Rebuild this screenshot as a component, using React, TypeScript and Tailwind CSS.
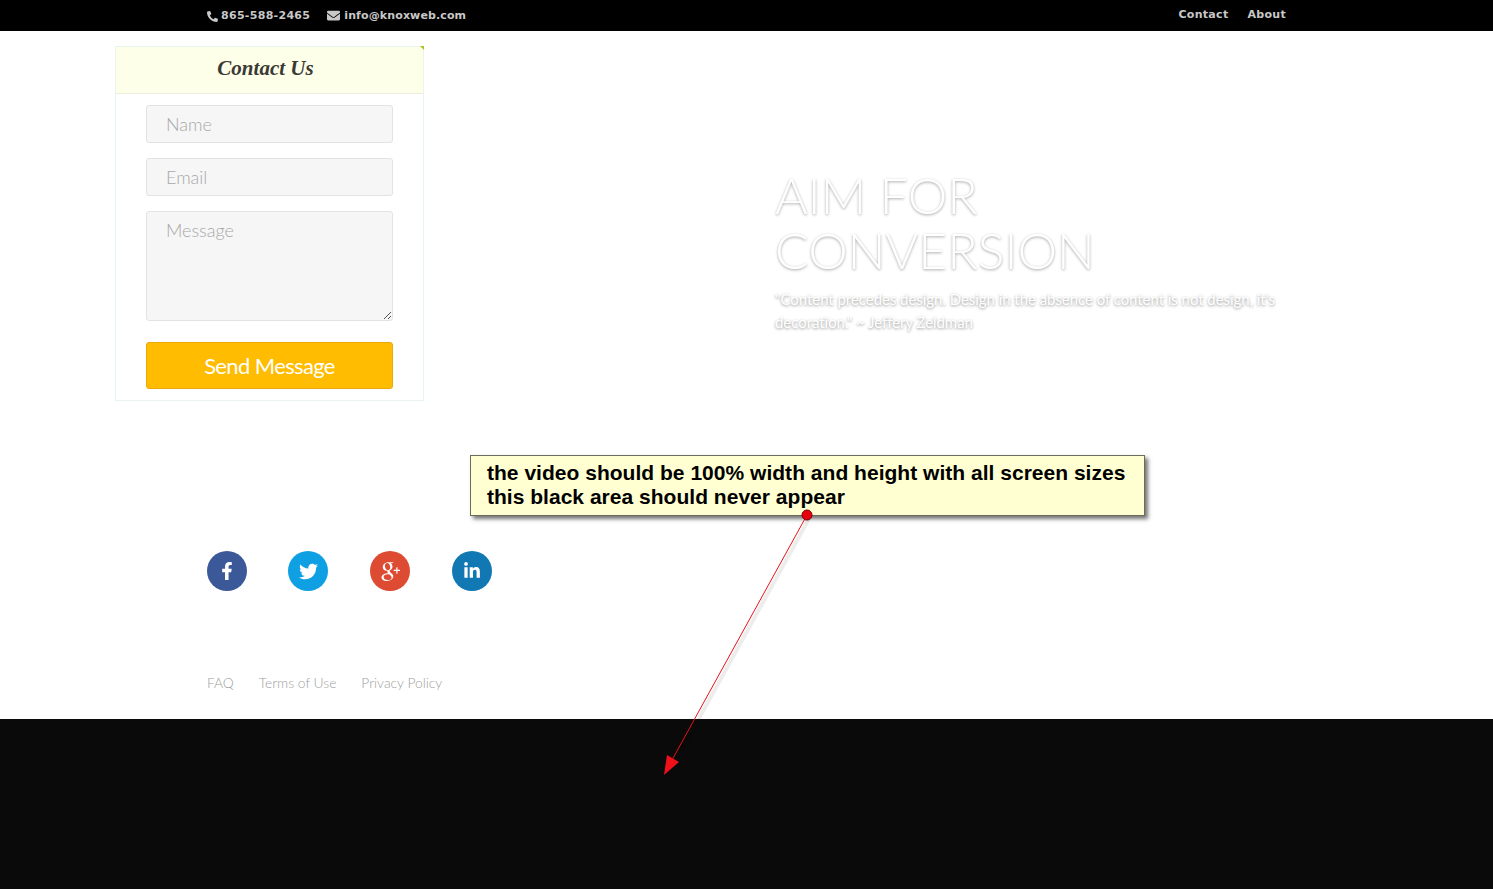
import React from 'react';
import { FaEnvelope, FaFacebookF, FaLinkedinIn, FaPhoneAlt, FaTwitter } from 'react-icons/fa';
import { TiSocialGooglePlus } from 'react-icons/ti';

const SOCIALS = [
  { icon: <FaFacebookF size={18} />, bg: 'bg-[#3b5998]' },
  { icon: <FaTwitter size={19} />, bg: 'bg-[#0f9fe3]' },
  { icon: <TiSocialGooglePlus size={30} />, bg: 'bg-[#dd4b32]' },
  { icon: <FaLinkedinIn size={18} />, bg: 'bg-[#1178b3]' },
];

const FIELD = "block w-full bg-[#f6f6f6] border border-[#e3e3e3] rounded-[3px] px-[19px] text-[18px] text-[#a8a8a8] font-light";

export default function App() {
  return (
    <div className="relative h-[889px] overflow-hidden bg-white font-['Lato',sans-serif]">
      <header className="h-[31px] bg-black flex justify-between pl-[207px] pr-[207px] font-['DejaVu_Sans',sans-serif] text-[11px] font-bold tracking-[0.3px] text-[#c8c8c8]">
        <div className="flex items-center gap-[17px] pt-px">
          <span className="flex items-center gap-[3px]"><FaPhoneAlt size={11} />865-588-2465</span>
          <span className="flex items-center gap-[4px] tracking-[0.12px]"><FaEnvelope size={13} className="-mt-px" />info@knoxweb.com</span>
        </div>
        <nav className="flex items-center gap-[19px]">
          <span>Contact</span>
          <span>About</span>
        </nav>
      </header>

      <main className="flex h-[688px] flex-col">
        <section className="flex pl-[115px] pt-[15px]">
          <form className="relative w-[309px] h-[355px] border border-[#e8f4ee] shrink-0">
            <span className="absolute -top-px -right-px w-0 h-0 border-l-[4px] border-l-transparent border-t-[4px] border-t-[#a5c81e]" />
            <h2 className="h-[47px] bg-[#feffe9] border-b border-[#ececdf] flex items-center justify-center pr-[8px] pb-[3px] font-['Liberation_Serif',serif] italic font-bold text-[21px] text-[#3a3a35]">
              Contact Us
            </h2>
            <div className="flex flex-col px-[30px] pt-[11px]">
              <div className={`${FIELD} h-[38px] leading-[36px]`}>Name</div>
              <div className={`${FIELD} h-[38px] leading-[36px] mt-[15px]`}>Email</div>
              <div className={`${FIELD} relative h-[110px] pt-[5px] mt-[15px]`}>
                Message
                <svg className="absolute right-0 bottom-0" width="10" height="10" viewBox="0 0 10 10" stroke="#555" strokeWidth="1">
                  <path d="M2 9 9 2M6 9 9 6" />
                </svg>
              </div>
              <button type="button" className="h-[47px] mt-[21px] bg-[#ffbc00] border border-[#eaa90b] rounded-[3px] text-white text-[22px] tracking-[-0.63px]">
                Send Message
              </button>
            </div>
          </form>

          <div className="ml-[351px] pt-[122px] w-[510px]">
            <h1 className="text-[50px] leading-[55px] font-light text-white [text-shadow:0_1px_3px_rgba(0,0,0,0.36)]">
              AIM FOR<br />CONVERSION
            </h1>
            <p className="mt-[10px] text-[15px] leading-[23px] tracking-[-0.05px] text-white [text-shadow:0_1px_3px_rgba(0,0,0,0.45)]">
              "Content precedes design. Design in the absence of content is not design, it's decoration." ~ Jeffery Zeldman
            </p>
          </div>
        </section>

        <div className="flex gap-[41.67px] pl-[206.6px] mt-[150px]">
          {SOCIALS.map((s, i) => (
            <span key={i} className={`w-[40px] h-[40px] rounded-full flex items-center justify-center text-white ${s.bg}`}>
              {s.icon}
            </span>
          ))}
        </div>

        <nav className="flex gap-[25px] pl-[207px] mt-[82px] text-[13.8px] font-light text-[#a0a0a0]">
          <span>FAQ</span>
          <span>Terms of Use</span>
          <span>Privacy Policy</span>
        </nav>
      </main>

      <div className="h-[170px] bg-[#0a0a0a]" />

      {/* annotation on top of the page */}
      <div className="absolute left-[470px] top-[455px] w-[675px] h-[61px] bg-[#ffffd2] border border-[#6b6b5e] shadow-[3px_3px_4px_rgba(0,0,0,0.55)] pl-[16px] pt-[5px] font-['Liberation_Sans',sans-serif] font-bold text-[21px] leading-[24px] tracking-[0.02px] text-black whitespace-nowrap">
        the video should be 100% width and height with all screen sizes<br />
        this black area should never appear
      </div>
      <svg className="absolute left-[650px] top-[505px]" width="170" height="280" viewBox="0 0 170 280">
        <path d="M160 12 25 257" stroke="rgba(0,0,0,0.07)" strokeWidth="4" fill="none" />
        <path d="M157 10 22 255" stroke="#e8101a" strokeWidth="1" fill="none" />
        <path d="M14 270 17 250 29 257Z" fill="#f0101a" />
        <circle cx="157" cy="10" r="5" fill="#e8000c" stroke="#7a0006" strokeWidth="1" />
      </svg>
    </div>
  );
}
